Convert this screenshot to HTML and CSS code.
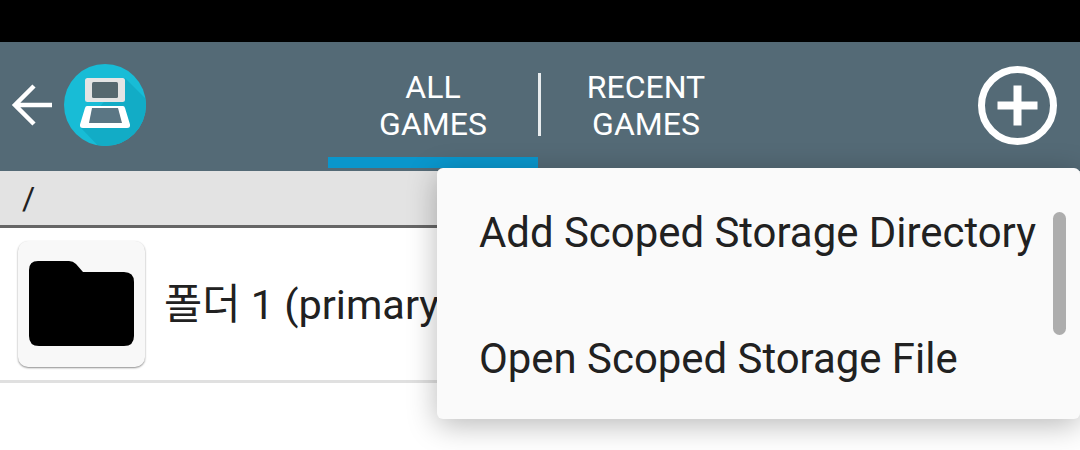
FILE: index.html
```html
<!DOCTYPE html>
<html lang="en">
<head>
    <meta charset="UTF-8">
    <title>Games</title>
    <link rel="stylesheet" href="styles.css">
</head>
<body>
    <div class="status-bar"></div>
    <header class="app-bar">
        <svg class="back-icon" viewBox="0 0 44 44" width="44" height="44">
            <path d="M43 22H5M25 3L6 22L25 41" fill="none" stroke="#fff" stroke-width="4.500"/>
        </svg>
        <svg class="logo" viewBox="0 0 82 82" width="82" height="82">
            <defs>
                <clipPath id="logoClip"><circle cx="41" cy="41" r="41"/></clipPath>
            </defs>
            <circle cx="41" cy="41" r="41" fill="#18bcd6"/>
            <path d="M61 14L90 43V90H42L17 64Z" fill="#12acc6" clip-path="url(#logoClip)"/>
            <rect x="21" y="14" width="40" height="24" rx="2.500" fill="#e4e4e4"/>
            <rect x="28" y="18" width="26" height="16" rx="1.500" fill="#56686f"/>
            <path d="M23 42H59Q60.500 42 61 44L66 60.500Q66.500 64 63 64H19Q15.500 64 16 60.500L21 44Q21.500 42 23 42Z" fill="#fff"/>
            <path d="M28 44H54L58 59H25Z" fill="#5b7684"/>
        </svg>
        <nav class="tabs">
            <div class="tab tab-active">ALL<br>GAMES</div>
            <div class="tab-divider"></div>
            <div class="tab">RECENT<br>GAMES</div>
        </nav>
        <svg class="add-icon" viewBox="0 0 81 81" width="81" height="81">
            <circle cx="40.500" cy="40.500" r="36" fill="none" stroke="#fff" stroke-width="7"/>
            <path d="M40.500 20.500V60.500M20.500 40.500H60.500" fill="none" stroke="#fff" stroke-width="8"/>
        </svg>
    </header>
    <div class="path-bar">/</div>
    <div class="file-row">
        <div class="file-thumb">
            <svg class="folder-icon" viewBox="0 0 105 85" width="105" height="85">
                <path d="M9 0H40Q44 0 47 3L54 11H95Q105 11 105 21V75Q105 85 95 85H10Q0 85 0 75V9Q0 0 9 0Z" fill="#000"/>
            </svg>
        </div>
        <div class="file-name">폴더 1 (primary</div>
    </div>

    <div class="popup-menu">
        <div class="menu-item">Add Scoped Storage Directory</div>
        <div class="menu-item">Open Scoped Storage File</div>
        <div class="menu-scrollbar"></div>
    </div>
</body>
</html>
```

FILE: styles.css
```css
* {
    margin: 0;
    padding: 0;
    box-sizing: border-box;
}

body {
    width: 1080px;
    height: 450px;
    overflow: hidden;
    background-color: #ffffff;
    font-family: Roboto, 'Noto Sans CJK KR', sans-serif;
    color: #212121;
}

.status-bar {
    height: 42px;
    background-color: #000000;
}

.app-bar {
    height: 129px;
    background-color: #546a76;
    display: flex;
    align-items: flex-start;
}

.back-icon {
    margin: 41px 0 0 9px;
}

.logo {
    margin: 22px 0 0 11px;
}

.tabs {
    display: flex;
    align-items: flex-start;
    margin-left: 182px;
    width: 424px;
}

.tab {
    width: 210px;
    height: 126px;
    padding-top: 27px;
    font-size: 32px;
    line-height: 37px;
    text-align: center;
    color: #ffffff;
}

.tab-active {
    border-bottom: 11px solid #0a96cc;
}

.tab-divider {
    width: 3px;
    height: 63px;
    margin-top: 31px;
    background-color: #e8ecee;
}

.add-icon {
    margin: 23px 0 0 225px;
}

.path-bar {
    height: 57px;
    padding: 5px 0 0 22px;
    background-color: #e3e3e3;
    border-bottom: 3px solid #666666;
    font-size: 32px;
    line-height: 44px;
}

.file-row {
    height: 155px;
    display: flex;
    align-items: center;
    padding: 0 0 0 18px;
    border-bottom: 3px solid #e0e0e0;
}

.file-thumb {
    width: 127px;
    height: 126px;
    display: flex;
    align-items: center;
    justify-content: center;
    background-color: #f8f8f8;
    border-radius: 10px;
    box-shadow: 0 1px 2px rgba(0, 0, 0, 0.45);
}

.folder-icon {
    margin-bottom: 2px;
    filter: blur(0.5px);
}

.file-name {
    margin: 0 0 6px 19px;
    font-size: 41.500px;
    white-space: nowrap;
}

.popup-menu {
    position: absolute;
    top: 168px;
    left: 437px;
    width: 643px;
    height: 251px;
    background-color: #fafafa;
    border-radius: 6px;
    box-shadow: 0 6px 30px rgba(0, 0, 0, 0.28);
}

.menu-item {
    height: 126px;
    padding-left: 42px;
    font-size: 41.900px;
    line-height: 130px;
    white-space: nowrap;
}

.menu-scrollbar {
    position: absolute;
    top: 44px;
    right: 14px;
    width: 13px;
    height: 123px;
    background-color: #adadad;
    border-radius: 7px;
}
```
